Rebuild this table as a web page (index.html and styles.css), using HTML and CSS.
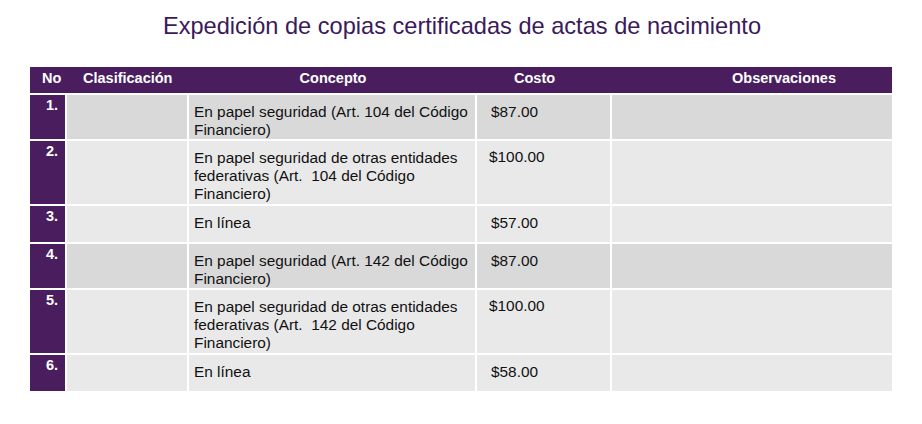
FILE: index.html
```html
<!DOCTYPE html>
<html lang="es">
<head>
<meta charset="utf-8">
<title>Expedición de copias certificadas de actas de nacimiento</title>
<link rel="stylesheet" href="styles.css">
</head>
<body>
<h1 class="title">Expedición de copias certificadas de actas de nacimiento</h1>
<div class="table">
  <div class="head">
    <div class="h h-no">No</div>
    <div class="h h-clas">Clasificación</div>
    <div class="h h-con">Concepto</div>
    <div class="h h-cost">Costo</div>
    <div class="h h-obs">Observaciones</div>
  </div>

  <div class="row dark">
    <div class="no">1.</div>
    <div class="cell"></div>
    <div class="cell con">En papel seguridad (Art. 104 del Código Financiero)</div>
    <div class="cell cost">$87.00</div>
    <div class="cell"></div>
  </div>
  <div class="row tall">
    <div class="no">2.</div>
    <div class="cell"></div>
    <div class="cell con">En papel seguridad de otras entidades federativas (Art.&nbsp; 104 del Código Financiero)</div>
    <div class="cell cost c100">$100.00</div>
    <div class="cell"></div>
  </div>
  <div class="row">
    <div class="no">3.</div>
    <div class="cell"></div>
    <div class="cell con">En línea</div>
    <div class="cell cost">$57.00</div>
    <div class="cell"></div>
  </div>
  <div class="row dark">
    <div class="no">4.</div>
    <div class="cell"></div>
    <div class="cell con">En papel seguridad (Art. 142 del Código Financiero)</div>
    <div class="cell cost">$87.00</div>
    <div class="cell"></div>
  </div>
  <div class="row tall">
    <div class="no">5.</div>
    <div class="cell"></div>
    <div class="cell con">En papel seguridad de otras entidades federativas (Art.&nbsp; 142 del Código Financiero)</div>
    <div class="cell cost c100">$100.00</div>
    <div class="cell"></div>
  </div>
  <div class="row">
    <div class="no">6.</div>
    <div class="cell"></div>
    <div class="cell con">En línea</div>
    <div class="cell cost">$58.00</div>
    <div class="cell"></div>
  </div>
</div>
</body>
</html>
```

FILE: styles.css
```css
html, body {
  margin: 0;
  padding: 0;
  background: #ffffff;
}

body {
  font-family: "Liberation Sans", Arial, sans-serif;
  width: 922px;
  height: 424px;
  overflow: hidden;
}

.title {
  margin: 0;
  padding-top: 13px;
  padding-left: 2px;
  font-size: 23.6px;
  line-height: 27px;
  font-weight: normal;
  text-align: center;
  color: #3b1a5b;
}

.table {
  margin: 27px 0 0 30px;
  width: 862px;
  display: grid;
  grid-template-columns: 35px 120px 286px 133px 280px;
  grid-template-rows: 26px;
  grid-auto-rows: minmax(36px, auto);
  column-gap: 2px;
  row-gap: 2px;
}

.head {
  grid-column: 1 / -1;
  display: grid;
  grid-template-columns: 37px 122px 288px 135px 280px;
  height: 26px;
  box-sizing: border-box;
  padding-top: 2px;
  background: #4a1e5e;
  color: #ffffff;
  font-weight: bold;
  font-size: 14.5px;
  line-height: 18px;
}

.h-no { padding-left: 12px; }
.h-clas { padding-left: 16px; }
.h-con { text-align: center; }
.h-cost { padding-left: 37px; }
.h-obs { padding-left: 120px; }

.row {
  display: contents;
}

.no {
  background: #4a1e5e;
  color: #ffffff;
  font-weight: bold;
  font-size: 14.5px;
  line-height: 18px;
  text-align: right;
  padding: 1px 7px 0 0;
}

.cell {
  background: #e9e9e9;
  color: #111111;
  font-size: 15.4px;
  line-height: 18px;
  padding: 8px 0 0 0;
}

.row.tall .cell {
  padding-bottom: 1px;
}

.row.dark .cell {
  background: #d9d9d9;
}

.con {
  padding-left: 5px;
  padding-right: 4px;
}

.cost {
  padding-left: 14px;
}

.cost.c100 {
  padding-left: 12px;
  padding-top: 7px;
}
```
